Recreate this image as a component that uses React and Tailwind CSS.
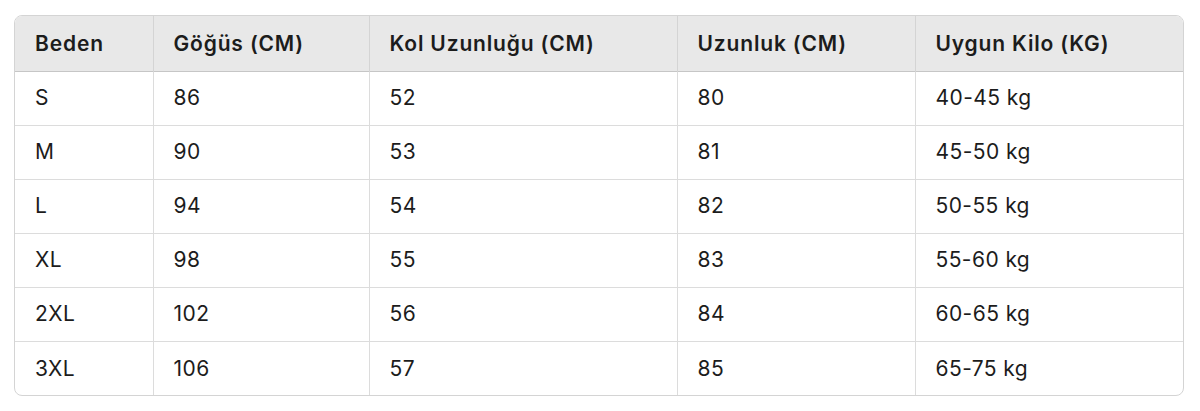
import React from 'react';

const columns = ['Beden', 'Göğüs (CM)', 'Kol Uzunluğu (CM)', 'Uzunluk (CM)', 'Uygun Kilo (KG)'];
const widths = ['w-[138px]', 'w-[216px]', 'w-[308px]', 'w-[238px]', ''];

const rows = [
  ['S', '86', '52', '80', '40-45 kg'],
  ['M', '90', '53', '81', '45-50 kg'],
  ['L', '94', '54', '82', '50-55 kg'],
  ['XL', '98', '55', '83', '55-60 kg'],
  ['2XL', '102', '56', '84', '60-65 kg'],
  ['3XL', '106', '57', '85', '65-75 kg'],
];

const App = () => {
  return (
    <div className="min-h-screen bg-white px-[14px] pt-[15px] font-['Inter',sans-serif] text-[#1c1c1c]">
      <div className="w-[1170px] overflow-hidden rounded-lg border border-[#d4d4d4]">
        <table className="w-full table-fixed border-collapse text-[21px]">
          <thead>
            <tr className="h-[55px] border-b border-[#c6c6c6] bg-[#e8e8e8]">
              {columns.map((col, i) => (
                <th
                  key={col}
                  className={`${widths[i]} border-l border-[#d4d4d4] px-[20px] text-left font-semibold tracking-[0.04em] first:border-l-0`}
                >
                  {col}
                </th>
              ))}
            </tr>
          </thead>
          <tbody>
            {rows.map((row, r) => (
              <tr key={row[0]} className={`h-[54px] ${r > 0 ? 'border-t border-[#dcdcdc]' : ''}`}>
                {row.map((cell, i) => (
                  <td key={i} className="border-l border-[#dcdcdc] px-[20px] font-normal tracking-[0.02em] first:border-l-0">
                    {cell}
                  </td>
                ))}
              </tr>
            ))}
          </tbody>
        </table>
      </div>
    </div>
  );
};

export default App;
